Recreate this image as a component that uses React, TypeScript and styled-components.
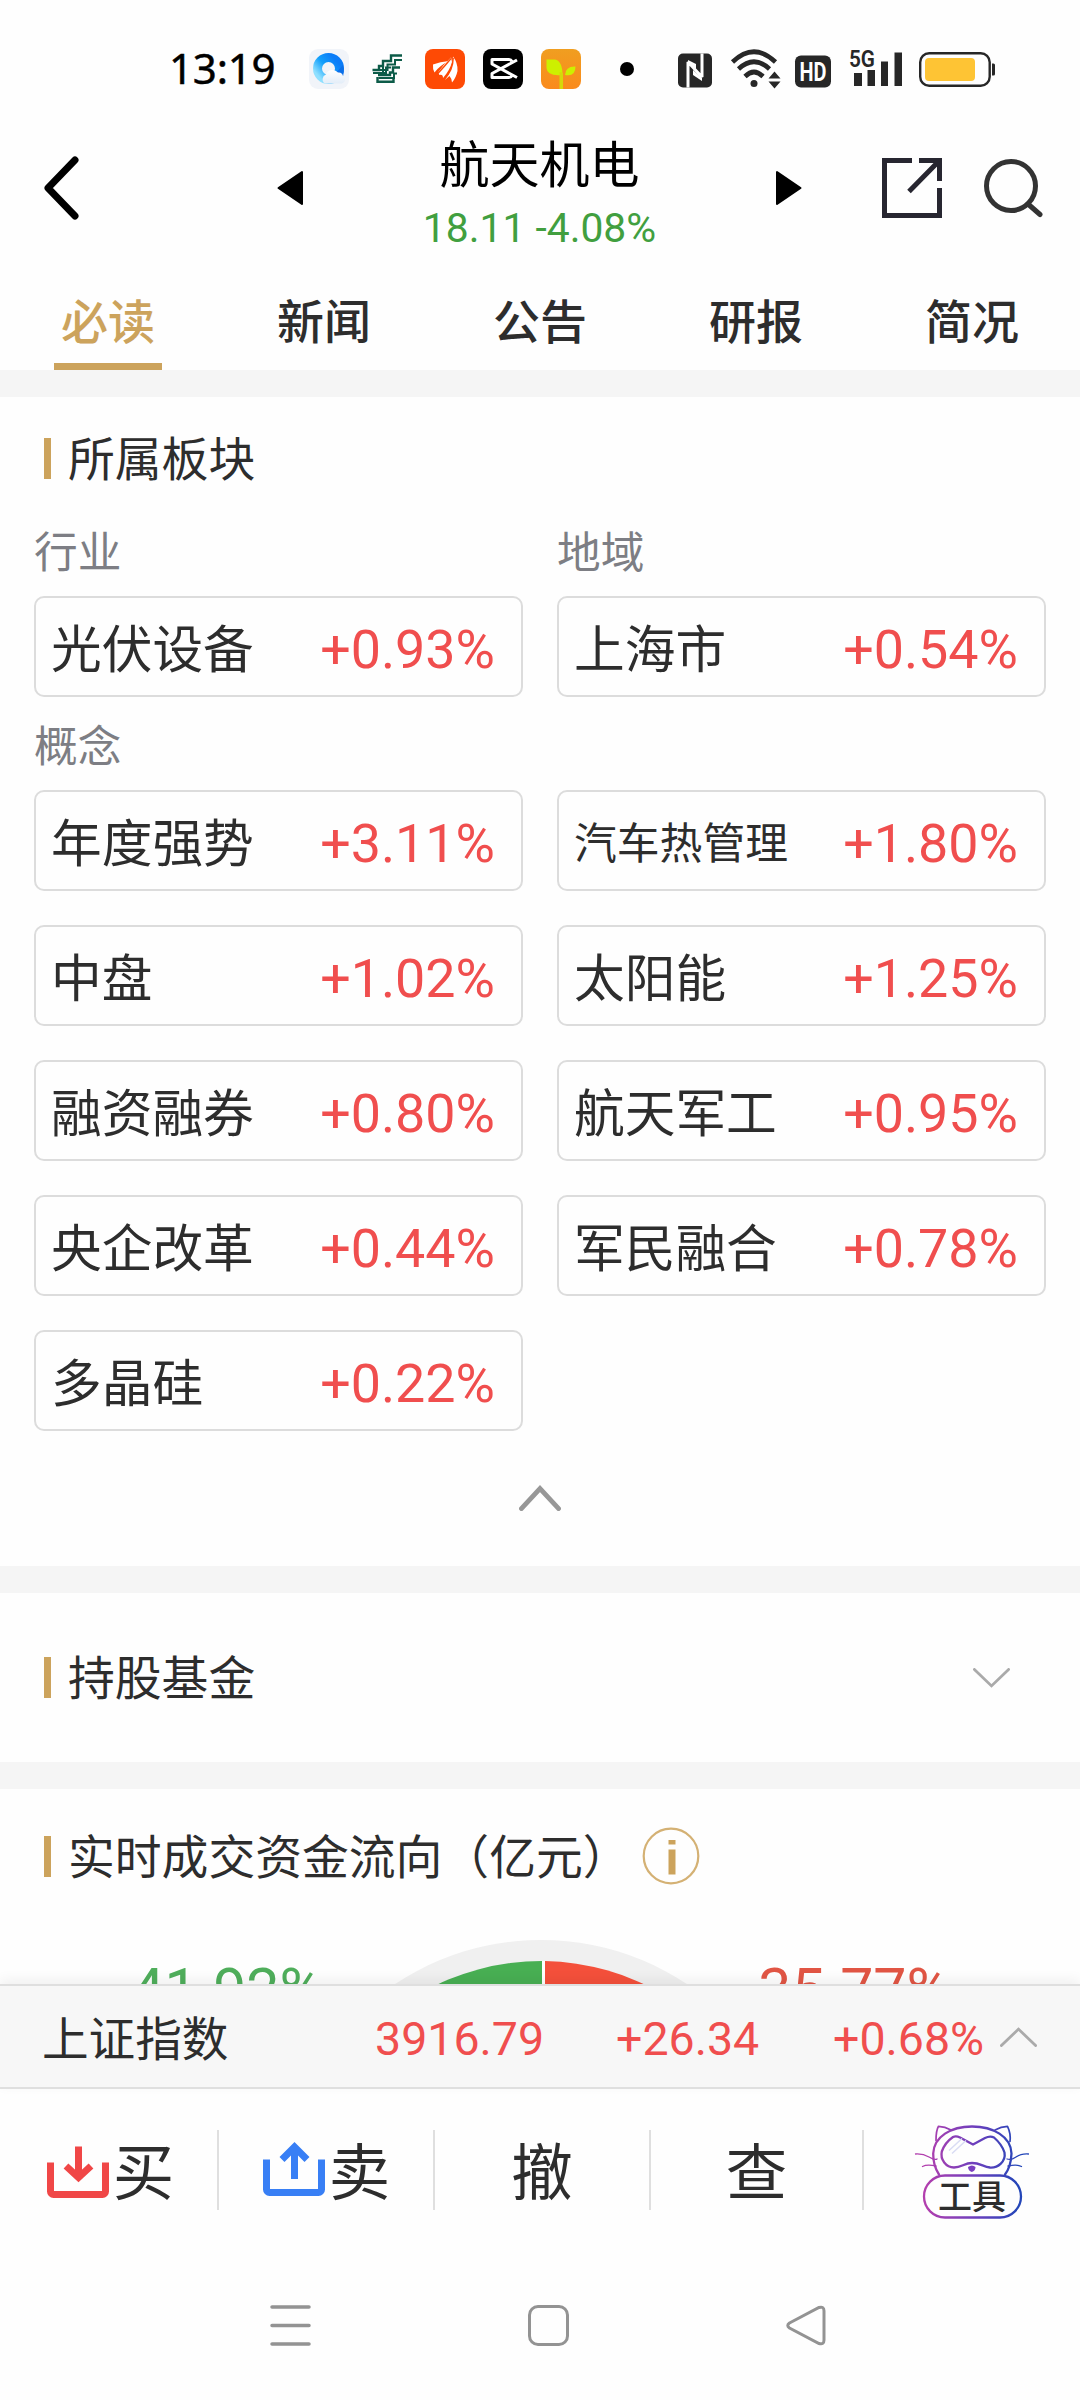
import React from "react";
import styled, { createGlobalStyle } from "styled-components";

const GOLD = "#cca35c";
const INK = "#2d2d2d";
const RED = "#f04e4e";
const CJK = `"Noto Sans CJK SC", "Noto Sans", sans-serif`;
const NUM = `Roboto, "Noto Sans CJK SC", sans-serif`;

const GlobalStyle = createGlobalStyle`
  * { box-sizing: border-box; }
  body { margin: 0; background: #fefefe; }
  svg { display: block; flex: none; }
`;

const Screen = styled.div`
  width: 1080px;
  height: 2400px;
  display: flex;
  flex-direction: column;
  overflow: hidden;
  background: #fefefe;
  color: ${INK};
  font-family: ${CJK};
`;

/* ---------- status bar ---------- */
const StatusBar = styled.header`
  height: 120px;
  flex: none;
  display: flex;
  align-items: center;
  padding: 18px 0 0 169px;
`;
const Clock = styled.span`
  width: 140px;
  margin-bottom: 2px;
  font: 400 42px/50px "Noto Sans", sans-serif;
  letter-spacing: -0.2px;
  color: #000;
  -webkit-text-stroke: 0.5px #000;
  white-space: nowrap;
`;
const StatusApps = styled.div`
  display: flex;
  align-items: center;
  gap: 18px;
`;
const Dot = styled.i`
  width: 14px;
  height: 14px;
  margin: -1px 44px 0 39px;
  border-radius: 50%;
  background: #000;
`;
const StatusSystem = styled.div`
  display: flex;
  align-items: center;
`;

/* ---------- stock header ---------- */
const TopBar = styled.div`
  height: 136px;
  flex: none;
  display: flex;
  align-items: center;
  justify-content: space-between;
  padding: 0 36px 0 42px;
`;
const Switcher = styled.div`
  width: 526px;
  margin-left: 198px;
  margin-right: 80px;
  display: flex;
  align-items: center;
  justify-content: space-between;
`;
const StockInfo = styled.div`
  margin-top: 8px;
  text-align: center;
`;
const StockName = styled.h1`
  margin: 0;
  font: 400 50px/60px ${CJK};
  color: #000;
`;
const StockPrice = styled.div`
  margin-top: 12px;
  font: 400 40.8px/50px ${NUM};
  color: #419f3f;
  white-space: nowrap;
`;
const Actions = styled.div`
  display: flex;
  align-items: center;
  gap: 42px;
`;

/* ---------- tabs ---------- */
const Tabs = styled.nav`
  height: 114px;
  flex: none;
  display: grid;
  grid-template-columns: repeat(5, 1fr);
`;
const Tab = styled.a<{ $active?: boolean }>`
  justify-self: center;
  width: 108px;
  padding-top: 33px;
  border-bottom: 7px solid ${(p) => (p.$active ? GOLD : "transparent")};
  font: 500 47px/60px ${CJK};
  text-align: center;
  color: ${(p) => (p.$active ? GOLD : INK)};
`;

/* ---------- content ---------- */
const Content = styled.main`
  height: 1614px;
  flex: none;
  overflow: hidden;
`;
const Section = styled.section<{ $height: number; $top: number }>`
  height: ${(p) => p.$height}px;
  padding: ${(p) => p.$top}px 34px 0;
  border-top: 27px solid #f5f5f5;
`;
const SectionTitle = styled.h2`
  margin: 0;
  padding: 0 36px 0 10px;
  height: 60px;
  display: flex;
  align-items: center;
  font: 400 46.8px/60px ${CJK};
  white-space: nowrap;
`;
const Marker = styled.i`
  width: 7px;
  height: 41px;
  margin: 5px 17px 0 0;
  background: ${GOLD};
`;
const PushRight = styled.span`
  margin: 6px 0 0 auto;
`;
const InfoButton = styled.span`
  margin: 3px 0 0 12px;
`;
const Grid = styled.div`
  display: grid;
  grid-template-columns: 489px 489px;
  gap: 34px;
`;
const Label = styled.div`
  height: 50px;
  font: 400 43.7px/50px ${CJK};
  color: #7d7e84;
`;
const LabelRow = styled(Grid)<{ $top: number }>`
  margin: ${(p) => p.$top}px 0 22px;
`;
const Card = styled.div`
  height: 101px;
  display: flex;
  align-items: center;
  justify-content: space-between;
  padding: 0 26px 0 15px;
  border: 2px solid #dcdcdc;
  border-radius: 10px;
`;
const CardName = styled.span<{ $small?: boolean }>`
  font: 400 ${(p) => (p.$small ? 42.8 : 50.7)}px/60px ${CJK};
  margin-bottom: 1px;
  white-space: nowrap;
`;
const CardChange = styled.span`
  margin-top: 7px;
  font: 400 53.8px/60px ${NUM};
  color: ${RED};
`;
const Collapse = styled.div`
  display: flex;
  justify-content: center;
  margin-top: 54px;
`;
const FlowRow = styled.div`
  display: flex;
  justify-content: space-between;
  margin: 56px -34px 0;
  padding: 0 128px 0 129px;
`;
const FlowShare = styled.span<{ $color: string }>`
  margin-top: 16px;
  width: 196px;
  text-align: center;
  font: 400 59px/68px ${NUM};
  color: ${(p) => p.$color};
`;
const FlowChart = styled.svg`
  margin: 0 -54px;
`;

/* ---------- index strip ---------- */
const IndexBar = styled.div`
  position: relative;
  height: 105px;
  flex: none;
  display: flex;
  align-items: center;
  padding: 0 42px 0 42px;
  border-top: 2px solid #dfdfdf;
  border-bottom: 2px solid #dfdfdf;
  background: #f7f7f7;
  box-shadow: 0 -4px 12px rgba(0, 0, 0, 0.06);
`;
const IndexName = styled.span`
  width: 333px;
  margin-bottom: 2px;
  font: 400 46.6px/60px ${CJK};
`;
const IndexValue = styled.span<{ $width: number }>`
  width: ${(p) => p.$width}px;
  margin-top: 4px;
  font: 400 46.5px/60px ${NUM};
  color: ${RED};
`;

/* ---------- trade toolbar ---------- */
const Toolbar = styled.div`
  height: 162px;
  flex: none;
  display: grid;
  grid-template-columns: 219px 216px 216px 213px 216px;
  align-items: center;
`;
const Tool = styled.button<{ $last?: boolean }>`
  height: 80px;
  padding: 0;
  display: flex;
  align-items: center;
  justify-content: center;
  gap: 4px;
  border: 0;
  border-right: ${(p) => (p.$last ? "0" : "2px solid #dfdfdf")};
  background: none;
  font: 400 61.5px/80px ${CJK};
  color: ${INK};
`;
const TradeTool = styled(Tool)<{ $shift: number }>`
  padding-left: ${(p) => p.$shift}px;
`;
const ToolText = styled.span`
  margin-bottom: 2px;
`;

/* ---------- system navigation ---------- */
const SystemNav = styled.footer`
  flex: 1;
  display: flex;
  align-items: flex-start;
  justify-content: space-between;
  padding: 54px 254px 0 270px;
`;

const Chevron = ({ w, h, s, color, down }: { w: number; h: number; s: number; color: string; down?: boolean }) => (
  <svg width={w} height={h} viewBox={`0 0 ${w} ${h}`} fill="none" stroke={color} strokeWidth={s}>
    <path
      d={
        down
          ? `M${s / 2} ${s / 2}L${w / 2} ${h - s * 0.75}L${w - s / 2} ${s / 2}`
          : `M${s / 2} ${h - s / 2}L${w / 2} ${s * 0.75}L${w - s / 2} ${h - s / 2}`
      }
      strokeLinecap="round"
    />
  </svg>
);

const BrowserIcon = () => (
  <svg width="40" height="40" viewBox="0 0 40 40">
    <defs>
      <linearGradient id="qb" x1="0.9" y1="0.2" x2="0.1" y2="0.9">
        <stop offset="0" stopColor="#0a7cf8" />
        <stop offset="0.5" stopColor="#12a0fb" />
        <stop offset="1" stopColor="#8fe0ff" />
      </linearGradient>
      <linearGradient id="qc" x1="0" y1="0" x2="0" y2="1">
        <stop offset="0" stopColor="#ffffff" />
        <stop offset="1" stopColor="#e3edf8" />
      </linearGradient>
    </defs>
    <rect width="40" height="40" rx="9" fill="#f1f4f9" />
    <circle cx="19.500" cy="19.500" r="11" fill="none" stroke="url(#qb)" strokeWidth="9" />
    <path d="M34 16q2 7-1 14l-8-4z" fill="#0b6fe8" />
    <path d="M16 34.500a5 5 0 0 1 1-9 7 7 0 0 1 12-2 4.500 4.500 0 0 1 5 3.500 4 4 0 0 1-1 7.500z" fill="url(#qc)" />
  </svg>
);

const BrokerIcon = () => (
  <svg width="40" height="40" viewBox="0 0 40 40" fill="none" stroke="#0c5b48" strokeWidth="2.400">
    <path d="M35 6.500H24V12H16V17H12V21H5.500" />
    <path d="M35 11H28V15.500H20.500V21H13" strokeWidth="2" />
    <path d="M33 18.500H26V23.500H23V26H11" />
    <path d="M6 24H19V18.500H24" strokeWidth="2" />
    <path d="M30 24.500H27V29H11.500" strokeWidth="2" />
    <path d="M26.500 29V32.800H10.500V28" />
    <path d="M16 17V26" strokeWidth="2" />
  </svg>
);

const FeatherIcon = () => (
  <svg width="40" height="40" viewBox="0 0 40 40">
    <rect width="40" height="40" rx="8" fill="#fe4a05" />
    <g fill="#fff">
      <path d="M8 15.500Q15 12.500 24 12Q14 17 9.500 23.500Q7.500 20 8 15.500Z" />
      <path d="M13 23.500Q18 16 26 8.500L27 13Q25 21 18 29Q18 25 14.500 26Z" />
      <path d="M28 7.500Q33 14 32.500 22Q31 29 27 33.500Q26.500 29 24.500 27Q22 29 20 31Q28 21 28 7.500Z" />
    </g>
    <path d="M11.500 26Q19 18 26 9.500M19 30Q28 22 28.200 9" fill="none" stroke="#fe4a05" strokeWidth="1.400" />
  </svg>
);

const CutIcon = () => (
  <svg width="40" height="40" viewBox="0 0 40 40">
    <rect width="40" height="40" rx="8" fill="#000" />
    <g fill="none" stroke="#fff" strokeWidth="3" strokeLinejoin="round">
      <path d="M34 11L9 24.500V28.500H26Q28 28.500 29 26.500" />
      <path d="M34 28.500L9 15V10.500H26Q28 10.500 29 12.500" />
    </g>
  </svg>
);

const SproutIcon = () => (
  <svg width="40" height="40" viewBox="0 0 40 40">
    <defs>
      <linearGradient id="sp" x1="0" y1="0" x2="0" y2="1">
        <stop offset="0" stopColor="#f09e20" />
        <stop offset="1" stopColor="#fa8a1c" />
      </linearGradient>
    </defs>
    <rect width="40" height="40" rx="8" fill="url(#sp)" />
    <path d="M5.500 10.500H14Q21.500 12 21.500 26Q6 27.500 5.500 19Z" fill="#cdf000" />
    <path d="M34.500 17.500Q24.500 17 24 26Q34.500 28 34.500 17.500Z" fill="#cdf000" />
    <path d="M18.500 23V40H22V24Z" fill="#d6d80a" />
  </svg>
);

const StatusGlyphs = () => (
  <svg width="320" height="42" viewBox="678 47 320 42" fill="#272727">
    {/* NFC */}
    <rect x="678" y="52.500" width="34" height="34" rx="5" />
    <path d="M688 86.500V61L702 76V52.500" fill="none" stroke="#fff" strokeWidth="3" strokeLinejoin="bevel" />
    <path d="M688 59L696 63V68L688 62ZM702 80L693 74V69L702 77Z" fill="#fff" />
    {/* Wi-Fi */}
    <g fill="none" stroke="#272727" strokeWidth="4.600">
      <path d="M732.500 61Q754 40.500 775.500 61" />
      <path d="M738.500 68Q754 53.500 769.500 68" />
      <path d="M745 75.500Q754 66.500 763 75.500" />
    </g>
    <circle cx="754" cy="82.500" r="3.500" />
    <path d="M768.500 77.500L774.500 70.500L780.500 77.500ZM768.500 80.500L774.500 87.500L780.500 80.500Z" />
    {/* HD */}
    <rect x="795" y="54.500" width="36" height="32" rx="6" />
    <text x="813" y="79.500" textAnchor="middle" fill="#fff" fontFamily="Roboto, sans-serif" fontWeight="700" fontSize="25" textLength="27" lengthAdjust="spacingAndGlyphs">
      HD
    </text>
    {/* mobile signal */}
    <text x="849" y="66" fontFamily="Roboto, sans-serif" fontWeight="600" fontSize="23.500" textLength="26" lengthAdjust="spacingAndGlyphs">
      5G
    </text>
    <path d="M854 72h8v13h-8zM867.500 69h7.500v16h-7.500zM881 60.500h7v24.500h-7zM894.500 51.500h7.500v33.500h-7.500z" />
    {/* battery */}
    <rect x="920.200" y="52.200" width="69.500" height="32.600" rx="9" fill="none" stroke="#272727" strokeWidth="2.400" />
    <rect x="925" y="57" width="50" height="23" rx="4" fill="#fec434" />
    <path d="M992 62.500h1.500a1.500 1.500 0 0 1 1.500 1.500v9a1.500 1.500 0 0 1-1.500 1.500h-1.500z" />
  </svg>
);

const ShareIcon = () => (
  <svg width="60" height="60" viewBox="0 0 60 60" fill="none" stroke="#272630" strokeWidth="5">
    <path d="M30 2.500H2.500V57.500H57.500V30" />
    <path d="M37 2.500H57.500V23M56 4L27 33.500" />
  </svg>
);

const SearchIcon = () => (
  <svg width="60" height="60" viewBox="0 0 60 60" fill="none" stroke="#333" strokeWidth="5">
    <circle cx="27" cy="28" r="24.500" />
    <path d="M44 46L56 56.500" strokeLinecap="round" />
  </svg>
);

const InfoIcon = () => (
  <svg width="58" height="58" viewBox="0 0 58 58">
    <circle cx="29" cy="29" r="27.300" fill="none" stroke={GOLD} strokeOpacity="0.850" strokeWidth="2.200" />
    <path d="M26.500 13h7v4.500h-7zM26.500 22.500h7v25h-7z" fill={GOLD} />
  </svg>
);

const TrayIcon = ({ up }: { up?: boolean }) => (
  <svg width="62" height="62" viewBox="0 0 62 62" fill="none" stroke={up ? "#387ff5" : "#f04747"} strokeWidth="7">
    {up ? (
      <>
        <path d="M3.500 20.500V50.500a3 3 0 0 0 3 3h49a3 3 0 0 0 3-3V20.500" />
        <path d="M31.500 40V9M19 20.500L31.500 8L44 20.500" />
      </>
    ) : (
      <>
        <path d="M3.500 23.500V52.500a3 3 0 0 0 3 3h49a3 3 0 0 0 3-3V23.500" />
        <path d="M31.500 7.500V38M19 27L31.500 38.500L44 27" />
      </>
    )}
  </svg>
);

const CatIcon = () => (
  <svg width="116" height="96" viewBox="914 2122.500 116 96" overflow="visible" fill="none">
    <defs>
      <linearGradient id="cat" gradientUnits="userSpaceOnUse" x1="926" y1="0" x2="1018" y2="0">
        <stop offset="0" stopColor="#b23fae" />
        <stop offset="0.550" stopColor="#6a3fbd" />
        <stop offset="1" stopColor="#2446b8" />
      </linearGradient>
    </defs>
    <g stroke="url(#cat)" strokeLinecap="round" strokeLinejoin="round">
      <g strokeWidth="2.300">
        <path d="M939 2175Q933 2166 933.200 2154C934 2137 951 2127 972 2127C993 2127 1011 2137 1011.500 2154Q1011 2167 1005 2175" />
        <rect x="924" y="2176" width="97" height="42" rx="21" />
        <path d="M953 2137.500Q956 2136 960 2138L973 2145L985 2138.500Q990 2136 994 2138Q1002 2145 1004.500 2153C1006 2162 998 2168.500 990 2168C983 2167 980 2163.500 972 2163.500C964 2163.500 962 2168 954 2168C946 2168 940 2160 941.800 2152Q945 2143 953 2137.500Z" />
      </g>
      <g strokeWidth="1.700">
        <path d="M936 2141Q936 2131 938.500 2126.800Q945 2127 951 2130.500M995 2130.500Q1001 2127 1007.500 2126.800Q1011 2134 1010 2142" />
        <path d="M915.500 2154.500Q923 2154 929 2157.500T937 2159.500M1028.500 2154.500Q1021 2154 1016 2157.500T1007 2159.500" strokeWidth="1.300" />
        <path d="M922.500 2167Q927 2164.500 936 2166.500M1021.500 2167Q1017 2164.500 1008 2166.500" strokeWidth="1.300" />
      </g>
    </g>
    <path d="M949 2151L962 2139M952 2154L966 2141" stroke="#d9dcf4" strokeWidth="1.500" />
    <path d="M968 2167.500q4-3 7.500 0q0 4-3.700 5q-3.500-1-3.800-5z" fill="#7a3fc0" />
    <text x="972" y="2209" textAnchor="middle" fill={INK} fontFamily={`"Noto Sans CJK SC", sans-serif`} fontWeight="500" fontSize="34">
      工具
    </text>
  </svg>
);

const Heading = ({ children }: { children: React.ReactNode }) => (
  <SectionTitle>
    <Marker />
    {children}
  </SectionTitle>
);

const concepts: [string, string][] = [
  ["年度强势", "+3.11%"],
  ["汽车热管理", "+1.80%"],
  ["中盘", "+1.02%"],
  ["太阳能", "+1.25%"],
  ["融资融券", "+0.80%"],
  ["航天军工", "+0.95%"],
  ["央企改革", "+0.44%"],
  ["军民融合", "+0.78%"],
  ["多晶硅", "+0.22%"],
];

const Sector = ({ name, change }: { name: string; change: string }) => (
  <Card>
    <CardName $small={name.length > 4}>{name}</CardName>
    <CardChange>{change}</CardChange>
  </Card>
);

export default function App() {
  return (
    <Screen>
      <GlobalStyle />
      <StatusBar>
        <Clock>13:19</Clock>
        <StatusApps>
          <BrowserIcon />
          <BrokerIcon />
          <FeatherIcon />
          <CutIcon />
          <SproutIcon />
        </StatusApps>
        <Dot />
        <StatusSystem>
          <StatusGlyphs />
        </StatusSystem>
      </StatusBar>

      <TopBar>
        <svg width="37" height="64" viewBox="0 0 37 64" fill="none" stroke="#000" strokeWidth="7">
          <path d="M33 4L6 32L33 60" strokeLinecap="round" strokeLinejoin="round" />
        </svg>
        <Switcher>
          <svg width="26" height="36" viewBox="0 0 26 36">
            <path d="M25 2V34L1.500 18Z" stroke="#000" strokeWidth="2" strokeLinejoin="round" />
          </svg>
          <StockInfo>
            <StockName>航天机电</StockName>
            <StockPrice>18.11 -4.08%</StockPrice>
          </StockInfo>
          <svg width="26" height="36" viewBox="0 0 26 36">
            <path d="M1 2V34L24.500 18Z" stroke="#000" strokeWidth="2" strokeLinejoin="round" />
          </svg>
        </Switcher>
        <Actions>
          <ShareIcon />
          <SearchIcon />
        </Actions>
      </TopBar>

      <Tabs>
        <Tab $active>必读</Tab>
        <Tab>新闻</Tab>
        <Tab>公告</Tab>
        <Tab>研报</Tab>
        <Tab>简况</Tab>
      </Tabs>

      <Content>
        <Section $height={1196} $top={29}>
          <Heading>所属板块</Heading>
          <LabelRow $top={38}>
            <Label>行业</Label>
            <Label>地域</Label>
          </LabelRow>
          <Grid>
            <Sector name="光伏设备" change="+0.93%" />
            <Sector name="上海市" change="+0.54%" />
          </Grid>
          <LabelRow $top={21}>
            <Label>概念</Label>
          </LabelRow>
          <Grid>
            {concepts.map(([name, change]) => (
              <Sector key={name} name={name} change={change} />
            ))}
          </Grid>
          <Collapse>
            <Chevron w={42} h={26} s={4.8} color="#979797" />
          </Collapse>
        </Section>

        <Section $height={196} $top={52}>
          <Heading>
            持股基金
            <PushRight>
              <Chevron w={37} h={20} s={2.8} color="#aaaaaa" down />
            </PushRight>
          </Heading>
        </Section>

        <Section $height={600} $top={35}>
          <Heading>
            实时成交资金流向（亿元）
            <InfoButton>
              <InfoIcon />
            </InfoButton>
          </Heading>
          <FlowRow>
            <FlowShare $color="#4fae5b">41.92%</FlowShare>
            <FlowChart width="528" height="528" viewBox="-264 -264 528 528">
              <circle r="264" fill="#f0f0f0" />
              <path d="M1 0V-243A243 243 0 0 0 -210 121Z" fill="#48af53" />
              <path d="M4 0V-243A243 243 0 0 1 210 121Z" fill="#f4503b" />
              <path d="M2.500 0V-243" stroke="#fff" strokeWidth="3" />
            </FlowChart>
            <FlowShare $color="#e15544">35.77%</FlowShare>
          </FlowRow>
        </Section>
      </Content>

      <IndexBar>
        <IndexName>上证指数</IndexName>
        <IndexValue $width={241}>3916.79</IndexValue>
        <IndexValue $width={217}>+26.34</IndexValue>
        <IndexValue $width={167}>+0.68%</IndexValue>
        <Chevron w={37} h={20} s={2.8} color="#aaaaaa" />
      </IndexBar>

      <Toolbar>
        <TradeTool $shift={4}>
          <TrayIcon />
          <ToolText>买</ToolText>
        </TradeTool>
        <TradeTool $shift={1}>
          <TrayIcon up />
          <ToolText>卖</ToolText>
        </TradeTool>
        <Tool>
          <ToolText>撤</ToolText>
        </Tool>
        <Tool>
          <ToolText>查</ToolText>
        </Tool>
        <Tool $last>
          <CatIcon />
        </Tool>
      </Toolbar>

      <SystemNav>
        <svg width="41" height="41" viewBox="0 0 41 41" stroke="#939393" strokeWidth="3.500" strokeLinecap="round">
          <path d="M2 2H39M2 20.500H39M2 39H39" />
        </svg>
        <svg width="41" height="41" viewBox="0 0 41 41" fill="none" stroke="#939393" strokeWidth="3">
          <rect x="1.500" y="1.500" width="38" height="38" rx="8.500" />
        </svg>
        <svg width="40" height="41" viewBox="0 0 40 41" fill="none" stroke="#939393" strokeWidth="3">
          <path d="M3.500 18L33 2.500Q38 1 38 6V35Q38 40 33 38.500L3.500 23Q0 20.500 3.500 18Z" />
        </svg>
      </SystemNav>
    </Screen>
  );
}
